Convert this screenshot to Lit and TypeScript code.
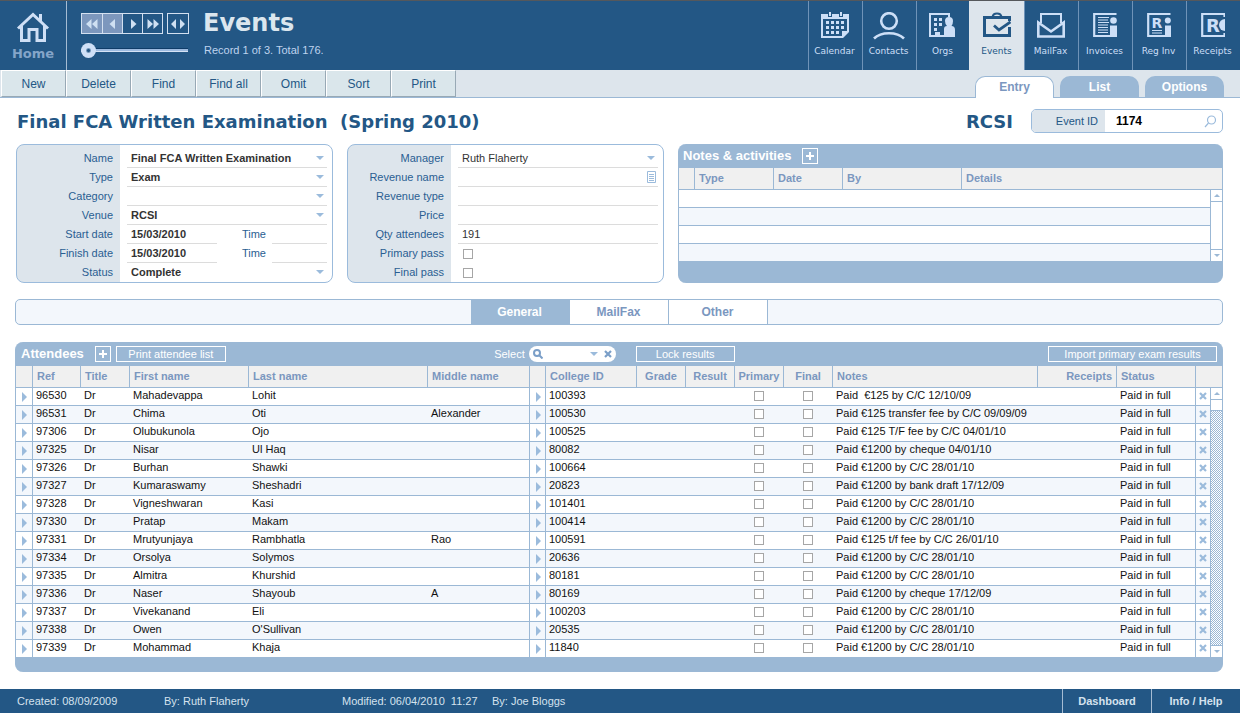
import { LitElement, html, css, nothing } from "lit";
import { customElement, state } from "lit/decorators.js";
import { classMap } from "lit/directives/class-map.js";

interface Attendee {
  ref: string;
  first: string;
  last: string;
  middle: string;
  college: string;
  notes: string;
}

const person = (ref: string, first: string, last: string, middle: string, college: string, notes: string): Attendee => ({
  ref, first, last, middle, college, notes,
});

const ATTENDEES: Attendee[] = [
  person("96530", "Mahadevappa", "Lohit", "", "100393", "Paid  €125 by C/C 12/10/09"),
  person("96531", "Chima", "Oti", "Alexander", "100530", "Paid €125 transfer fee by C/C 09/09/09"),
  person("97306", "Olubukunola", "Ojo", "", "100525", "Paid €125 T/F fee by C/C 04/01/10"),
  person("97325", "Nisar", "Ul Haq", "", "80082", "Paid €1200 by cheque 04/01/10"),
  person("97326", "Burhan", "Shawki", "", "100664", "Paid €1200 by C/C 28/01/10"),
  person("97327", "Kumaraswamy", "Sheshadri", "", "20823", "Paid €1200 by bank draft 17/12/09"),
  person("97328", "Vigneshwaran", "Kasi", "", "101401", "Paid €1200 by C/C 28/01/10"),
  person("97330", "Pratap", "Makam", "", "100414", "Paid €1200 by C/C 28/01/10"),
  person("97331", "Mrutyunjaya", "Rambhatla", "Rao", "100591", "Paid €125 t/f fee by C/C 26/01/10"),
  person("97334", "Orsolya", "Solymos", "", "20636", "Paid €1200 by C/C 28/01/10"),
  person("97335", "Almitra", "Khurshid", "", "80181", "Paid €1200 by C/C 28/01/10"),
  person("97336", "Naser", "Shayoub", "A", "80169", "Paid €1200 by cheque 17/12/09"),
  person("97337", "Vivekanand", "Eli", "", "100203", "Paid €1200 by C/C 28/01/10"),
  person("97338", "Owen", "O'Sullivan", "", "20535", "Paid €1200 by C/C 28/01/10"),
  person("97339", "Mohammad", "Khaja", "", "11840", "Paid €1200 by C/C 28/01/10"),
];

const MODULES = [
  {
    name: "Calendar",
    icon: html`<svg width="28" height="26" viewBox="0 0 28 26" aria-hidden="true">
      <path fill="currentColor" fill-rule="evenodd" d="M0 2H28V26H0ZM2 7V24H21V19H26V7Z"/>
      <path fill="currentColor" d="M21 24V19H26Z"/>
      <path fill="#235785" d="M22 26L28 20V26ZM7 0H11V5H7ZM18 0H22V5H18Z"/>
      <path fill="currentColor" d="M8 0H10V4H8ZM19 0H21V4H19ZM5 9h3v3H5zM10 9h3v3h-3zM15 9h3v3h-3zM20 9h3v3h-3zM5 14h3v3H5zM10 14h3v3h-3zM15 14h3v3h-3zM20 14h3v3h-3zM5 19h3v3H5zM10 19h3v3h-3zM15 19h3v3h-3z"/>
    </svg>`,
  },
  {
    name: "Contacts",
    icon: html`<svg width="32" height="28" viewBox="0 0 32 28" aria-hidden="true">
      <g fill="none" stroke="currentColor" stroke-width="2.6"><circle cx="16" cy="9" r="7.8"/><path d="M1 26.5C8 19.5 24 19.5 31 26.5"/></g>
    </svg>`,
  },
  {
    name: "Orgs",
    icon: html`<svg width="27" height="26" viewBox="0 0 27 26" aria-hidden="true">
      <path fill="none" stroke="currentColor" stroke-width="2" d="M20 5V2H1V24H15"/>
      <path fill="currentColor" d="M5 6h3v3H5zM10 6h3v3h-3zM5 11h3v3H5zM10 11h3v3h-3zM5 16h3v3H5zM6 20h5v5H6zM15 25V17Q15 14 18 14Q16 12 16 9Q16 5 20 5Q24 5 24 9Q24 12 22.500 14Q26 14 26 18V25Z"/>
    </svg>`,
  },
  {
    name: "Events",
    icon: html`<svg width="28" height="26" viewBox="0 0 28 26" aria-hidden="true">
      <path fill="none" stroke="currentColor" stroke-width="3" d="M26.500 9V5.500H1.500V23.500H26.500V15"/>
      <path fill="none" stroke="currentColor" stroke-width="2" d="M9.500 5Q10 1.500 14 1.500Q18 1.500 18.500 5"/>
      <path fill="none" stroke="currentColor" stroke-width="2.800" d="M11 13.500L16 18L27.500 10"/>
    </svg>`,
  },
  {
    name: "MailFax",
    icon: html`<svg width="28" height="26" viewBox="0 0 28 26" aria-hidden="true">
      <path fill="none" stroke="currentColor" stroke-width="2" d="M4 11V2H24V11"/>
      <path fill="none" stroke="currentColor" stroke-width="2.600" d="M1.300 10.500V24.500H26.700V10.500L14 19.500Z"/>
    </svg>`,
  },
  {
    name: "Invoices",
    icon: html`<svg width="24" height="26" viewBox="0 0 24 26" aria-hidden="true">
      <path fill="none" stroke="currentColor" stroke-width="2.200" d="M23.500 2H1.200V24H18"/>
      <path fill="none" stroke="currentColor" stroke-width="1.200" d="M5 5.500H16M5 8H15M5 10.500H16M5 13H15M5 15.500H15M5 18H15M5 20.500H15"/>
      <path fill="currentColor" d="M17 13.500H24V25H17Z"/><circle cx="20.500" cy="8.500" r="3.300" fill="currentColor"/>
    </svg>`,
  },
  {
    name: "Reg Inv",
    icon: html`<svg width="24" height="26" viewBox="0 0 24 26" aria-hidden="true">
      <path fill="none" stroke="currentColor" stroke-width="2.200" d="M23.500 2H1.200V24H18"/>
      <text x="4.500" y="16" font-family="DejaVu Sans" font-weight="bold" font-size="14" fill="currentColor">R</text>
      <path fill="none" stroke="currentColor" stroke-width="1.200" d="M5 18.500H15M5 21H15"/>
      <path fill="currentColor" d="M18 13.500H24V25H18Z"/><circle cx="20.800" cy="8.500" r="3" fill="currentColor"/>
    </svg>`,
  },
  {
    name: "Receipts",
    icon: html`<svg width="24" height="26" viewBox="0 0 24 26" aria-hidden="true">
      <path fill="none" stroke="currentColor" stroke-width="2.200" d="M23.500 5V2H1.200V24H23.500V21"/>
      <text x="5" y="19.500" font-family="DejaVu Sans" font-weight="bold" font-size="18" fill="currentColor">R</text>
      <path fill="currentColor" d="M24 7A6 6 0 0 0 24 19Z"/>
    </svg>`,
  },
];

const ACTIONS = ["New", "Delete", "Find", "Find all", "Omit", "Sort", "Print"];

const step = (d: string) => html`<svg width="20" height="20" viewBox="0 0 20 20" aria-hidden="true"><path fill="currentColor" d=${d}/></svg>`;

const downArrow = html`<svg class="down" width="8" height="4" viewBox="0 0 8 4" aria-hidden="true"><path fill="#9bbbdc" d="M0 0H8L4 4Z"/></svg>`;

const scrollArrow = (up: boolean) => html`<svg width="6" height="3" viewBox="0 0 6 3" aria-hidden="true"><path fill="#9bb8d5" d=${up ? "M0 3H6L3 0Z" : "M0 0H6L3 3Z"}/></svg>`;

const plus = html`<svg width="8" height="8" viewBox="0 0 8 8" aria-hidden="true"><path fill="#fff" d="M3 0h2v3h3v2H5v3H3V5H0V3h3z"/></svg>`;

const cross = (color: string) => html`<svg width="8" height="8" viewBox="0 0 8 8" aria-hidden="true"><path stroke=${color} stroke-width="2.200" d="M1 1L7 7M7 1L1 7"/></svg>`;

@customElement("app-root")
export class AppRoot extends LitElement {
  @state() private tab = "Entry";
  @state() private section = "General";

  static styles = css`
    :host {
      display: flex;
      flex-direction: column;
      min-height: 100vh;
      background: #fff;
      color: #111;
      font: 11px/14px "Liberation Sans", Arial, sans-serif;
    }
    * { box-sizing: border-box; }
    svg { display: block; flex: none; }
    button, input, select {
      font: inherit;
      color: inherit;
      margin: 0;
      padding: 0;
      border: 0;
      border-radius: 0;
      background: none;
      min-width: 0;
    }
    button { cursor: pointer; }
    a { color: inherit; text-decoration: none; }
    h1, h2, h3, p { margin: 0; }

    .top {
      display: flex;
      height: 70px;
      border-top: 1px solid #55585c;
      background: #235785;
      color: #d8e4f0;
    }
    .home {
      width: 67px;
      border-right: 1px solid #a5bcd3;
      display: flex;
      flex-direction: column;
      align-items: center;
      padding-top: 11px;
      gap: 3px;
      color: #84a5c9;
      font: bold 13px/16px "DejaVu Sans", Verdana, sans-serif;
    }
    .controls { padding: 12px 0 0 14px; width: 136px; }
    .steps { display: flex; gap: 4px; }
    .group { display: flex; border: 1px solid #d3e0f0; }
    .group button { width: 20px; height: 19px; color: #cfe0f2; display: grid; place-items: center; }
    .group button + button { border-left: 1px solid #d3e0f0; }
    .group button:disabled { background: #7c97bd; }
    .slider {
      appearance: none;
      display: block;
      width: 107px;
      height: 16px;
      margin-top: 8px;
      background: linear-gradient(#0f3c68 0 1px, #9dbbe0 1px 3px, #d5e2f5 3px 4px) 0 6px / 100% 4px no-repeat;
    }
    .slider::-webkit-slider-thumb {
      appearance: none;
      width: 15px;
      height: 15px;
      border-radius: 50%;
      background: radial-gradient(circle, #235785 0 1px, #cfe0f7 3px);
    }
    .heading { padding-top: 8px; }
    .heading h1 { font: bold 24px/28px "DejaVu Sans", Verdana, sans-serif; color: #dbe6ee; }
    .heading p { padding: 6px 0 0 1px; font-size: 11px; color: #bfd3ee; }
    .modules { margin-left: auto; display: flex; }
    .modules a {
      width: 54px;
      border-left: 1px solid #6f93b8;
      display: grid;
      grid-template-rows: 28px 14px;
      justify-items: center;
      padding: 11px 2px 0 0;
      row-gap: 4px;
      color: #cddff7;
      font: 9px/14px "DejaVu Sans", Verdana, sans-serif;
      white-space: nowrap;
    }
    .modules a.on { background: #dde5ec; color: #235785; border-left-color: #dde5ec; box-shadow: -1px 0 #dde5ec; }

    .bar {
      display: flex;
      height: 28px;
      background: #dde5ec;
      border-bottom: 1px solid #9bb8d5;
      padding: 0 16px 0 1px;
    }
    .bar .action {
      width: 65px;
      background: #dae6eb;
      border: 1px solid;
      border-color: #fff #98a9b5 #98a9b5 #fff;
      color: #235785;
      font-size: 12px;
    }
    .tabs { margin-left: auto; display: flex; align-items: flex-end; gap: 6px; margin-bottom: -1px; }
    .tabs button {
      width: 79px;
      height: 21px;
      margin-bottom: 1px;
      border-radius: 10px 10px 0 0;
      background: #9bb8d5;
      color: #fff;
      font-size: 12px;
      font-weight: bold;
    }
    .tabs button.on {
      height: 22px;
      margin-bottom: 0;
      padding-bottom: 2px;
      background: #fff;
      color: #7b97bf;
      border: 1px solid #9bb8d5;
      border-bottom: 0;
    }

    main { padding: 0 17px 0 15px; }
    .title { display: flex; align-items: center; height: 46px; color: #235785; padding-left: 2px; }
    .title h2 { font: bold 18px/24px "DejaVu Sans", Verdana, sans-serif; white-space: pre; padding-top: 2px; }
    .title h2:nth-child(2) { margin-left: auto; margin-right: 18px; }
    .eventid {
      display: flex;
      align-items: center;
      width: 192px;
      height: 24px;
      border: 1px solid #9bbbdc;
      border-radius: 5px;
      overflow: hidden;
      padding-right: 5px;
    }
    .eventid label { width: 73px; line-height: 22px; background: #dde5ec; text-align: right; padding-right: 7px; }
    .eventid input { flex: 1; font-weight: bold; font-size: 12px; color: #000; padding-left: 11px; }

    .panels { display: grid; grid-template-columns: 317fr 317fr 545fr; gap: 14px; margin-left: 1px; }
    .form {
      border: 1px solid #9bbbdc;
      border-radius: 8px;
      padding: 4px 5px 0 0;
      overflow: hidden;
      background: linear-gradient(90deg, #dde5ec 103px, #fff 103px);
    }
    .row { display: grid; grid-template-columns: 96px 1fr; column-gap: 14px; height: 19px; }
    .row > label, .time { text-align: right; line-height: 19px; color: #2a5e92; }
    .field { display: grid; grid-template-columns: 1fr 11px; align-items: center; border-bottom: 1px solid #dcdcdc; color: #333; }
    .row:last-child .field { border-bottom-color: transparent; }
    .field > :first-child { grid-area: 1 / 1 / 2 / 3; width: 100%; padding-left: 4px; height: 18px; }
    .field > svg { grid-area: 1 / 2; pointer-events: none; }
    .field select { appearance: none; }
    .strong { font-weight: bold; }
    .dates { display: grid; grid-template-columns: 90px 49px 1fr; column-gap: 3px; }
    .dates input { width: 100%; border-bottom: 1px solid #dcdcdc; padding-left: 4px; color: #333; }
    .dates .time { padding-right: 3px; }
    input[type="checkbox"] { appearance: none; display: block; width: 10px; height: 10px; border: 1px solid #a6a6a6; background: #fff; }
    .row input[type="checkbox"] { margin: 5px 0 0 5px; }

    .box { background: #9bb8d5; border: solid #9bb8d5; border-width: 0 1px; border-radius: 8px; overflow: hidden; display: flex; flex-direction: column; }
    .box header { display: flex; align-items: center; height: 24px; color: #fff; padding: 0 5px; }
    .box h3 { font-size: 13px; line-height: 16px; }
    .notes header { padding-left: 4px; }
    .add, .outline { height: 16px; border: 1px solid #fff; color: #fff; font-size: 11px; line-height: 14px; white-space: nowrap; }
    .add { width: 16px; display: grid; place-items: center; margin: 0 5px 0 11px; }
    .outline.print { width: 110px; }
    .outline.lock { width: 99px; }
    .outline.import { width: 169px; }
    .grid { display: flex; background: #fff; }
    table { flex: 1; min-width: 0; table-layout: fixed; border-collapse: separate; border-spacing: 0; }
    th {
      height: 22px;
      padding: 0 4px 1px;
      background: #f0f0f0;
      color: #7b97bf;
      font-size: 11px;
      text-align: left;
      white-space: nowrap;
      border: solid #9bb8d5;
      border-width: 0 1px 1px 0;
    }
    th:last-child { border-right: 0; }
    td { height: 18px; padding: 0 3px; border-bottom: 1px solid #9bb8d5; white-space: pre; line-height: 15px; vertical-align: top; }
    td.line { border-right: 1px solid #9bb8d5; }
    td.c { padding: 3px 1px 0 0; }
    td.c input, td.c button { margin: 0 auto; display: block; }
    td.c button { padding: 1px 0 0; }
    td.go { padding: 4px 0 0; }
    td.go button { margin-left: 6px; padding: 0; }
    tbody tr:nth-child(even) td { background: #f3f7fc; }
    tbody tr:last-child td { border-bottom: 0; height: 17px; }
    th.c { text-align: center; padding: 0 0 1px; }
    th.r { text-align: right; }
    .scroll { width: 12px; display: flex; flex-direction: column; }
    .scroll .cap { height: 22px; background: #f0f0f0; border-bottom: 1px solid #9bb8d5; }
    .scroll button { height: 12px; display: grid; place-items: center; border-left: 1px solid #9bb8d5; }
    .scroll button:first-of-type { border-bottom: 1px solid #9bb8d5; }
    .scroll button:last-of-type { border-top: 1px solid #9bb8d5; }
    .scroll .track { flex: 1; border-left: 1px solid #9bb8d5; }
    .scroll .full { background: repeating-conic-gradient(#9bb8d5 0 25%, #fff 0 50%) 0 0 / 2px 2px; }
    .thumb { height: 11px; background: #fff; border-bottom: 1px solid #9bb8d5; }
    .notes .end { height: 22px; }
    .attend .end { height: 15px; }

    .sections {
      display: flex;
      justify-content: center;
      height: 26px;
      margin: 16px 0 17px;
      border: 1px solid #9bb8d5;
      border-radius: 5px;
      background: #f3f7fc;
    }
    .sections button { width: 99px; background: #fff; color: #7b97bf; font-size: 12px; font-weight: bold; border-right: 1px solid #9bb8d5; }
    .sections button.on { background: #9bb8d5; color: #fff; }

    .spring { flex: 268; }
    .spring.wide { flex: 313; }
    .search { display: flex; align-items: center; width: 87px; height: 16px; margin: 0 20px 0 4px; padding: 0 4px; background: #fff; border-radius: 8px; color: #333; }
    .search input { flex: 1; }
    .search button { margin-left: 6px; }

    footer { display: flex; align-items: center; height: 24px; margin-top: auto; padding-left: 17px; background: #235785; color: #d5e2ee; white-space: pre; }
    footer .made { flex: 0 1 147px; }
    footer .by { flex: 0 1 178px; }
    footer .mod { flex: 0 1 150px; }
    footer a { width: 89px; line-height: 24px; border-left: 1px solid #a5bcd3; text-align: center; font-weight: bold; }
    footer a:first-of-type { margin-left: auto; }
  `;

  private pick(id: string, label: string, value: string, strong = true) {
    return html`<div class="row">
      <label for=${id}>${label}</label>
      <div class=${classMap({ field: true, strong })}>
        <select id=${id}><option>${value}</option></select>${downArrow}
      </div>
    </div>`;
  }

  private text(id: string, label: string, value = "", icon: unknown = nothing) {
    return html`<div class="row">
      <label for=${id}>${label}</label>
      <div class="field"><input id=${id} .value=${value} />${icon}</div>
    </div>`;
  }

  private date(id: string, label: string) {
    return html`<div class="row">
      <label for=${id}>${label}</label>
      <div class="dates">
        <input id=${id} class="strong" .value=${"15/03/2010"} />
        <label class="time" for="${id}-time">Time</label>
        <input id="${id}-time" />
      </div>
    </div>`;
  }

  private check(id: string, label: string) {
    return html`<div class="row">
      <label for=${id}>${label}</label>
      <input id=${id} type="checkbox" />
    </div>`;
  }

  private scrollbar(full: boolean) {
    return html`<div class="scroll">
      <div class="cap"></div>
      <button aria-label="Scroll up">${scrollArrow(true)}</button>
      <div class=${classMap({ track: true, full })}>${full ? html`<div class="thumb"></div>` : nothing}</div>
      <button aria-label="Scroll down">${scrollArrow(false)}</button>
    </div>`;
  }

  private attendee(a: Attendee) {
    const arrow = html`<svg width="5" height="10" viewBox="0 0 5 10" aria-hidden="true"><path fill="#9bbbdc" d="M0 0L5 5L0 10Z"/></svg>`;
    return html`<tr>
      <td class="line c go"><button aria-label="Open ${a.ref}">${arrow}</button></td>
      <td>${a.ref}</td>
      <td>Dr</td>
      <td>${a.first}</td>
      <td>${a.last}</td>
      <td class="line">${a.middle}</td>
      <td class="line c go"><button aria-label="Open ${a.college}">${arrow}</button></td>
      <td>${a.college}</td>
      <td></td>
      <td></td>
      <td class="c"><input type="checkbox" aria-label="Primary" /></td>
      <td class="c"><input type="checkbox" aria-label="Final" /></td>
      <td>${a.notes}</td>
      <td></td>
      <td class="line">Paid in full</td>
      <td class="c"><button aria-label="Remove ${a.ref}">${cross("#9bbbdc")}</button></td>
    </tr>`;
  }

  render() {
    const widths = [17, 48, 49, 119, 179, 102, 16, 91, 49, 49, 49, 49, 0, 79, 79, 14];
    return html`
      <div class="top">
        <a class="home" href="#home">
          <svg width="34" height="31" viewBox="0 0 34 31" aria-hidden="true">
            <path fill="none" stroke="#cfdff5" stroke-width="3" d="M2 16.500L17 2.500L32 16.500M24.500 2V9M5.500 14V28.500H13V17.500H21V28.500H28.500V14"/>
          </svg>
          Home
        </a>
        <div class="controls">
          <div class="steps">
            <div class="group">
              <button disabled aria-label="First">${step("M9.500 5V15L4 10ZM15.500 5V15L10 10Z")}</button>
              <button disabled aria-label="Previous">${step("M12 5V15L6.500 10Z")}</button>
              <button aria-label="Next">${step("M8 5V15L13.500 10Z")}</button>
              <button aria-label="Last">${step("M4.500 5V15L10 10ZM10.500 5V15L16 10Z")}</button>
            </div>
            <div class="group"><button aria-label="Go to record">${step("M8 5V15L3 10ZM12 5V15L17 10Z")}</button></div>
          </div>
          <input class="slider" type="range" min="1" max="3" value="1" aria-label="Record" />
        </div>
        <div class="heading">
          <h1>Events</h1>
          <p>Record 1 of 3. Total 176.</p>
        </div>
        <nav class="modules">
          ${MODULES.map((m) => html`<a href="#${m.name}" class=${classMap({ on: m.name === "Events" })}>${m.icon}<span>${m.name}</span></a>`)}
        </nav>
      </div>

      <div class="bar">
        ${ACTIONS.map((a) => html`<button class="action">${a}</button>`)}
        <div class="tabs">
          ${["Entry", "List", "Options"].map(
            (t) => html`<button class=${classMap({ on: this.tab === t })} @click=${() => (this.tab = t)}>${t}</button>`
          )}
        </div>
      </div>

      <main>
        <div class="title">
          <h2>Final FCA Written Examination  (Spring 2010)</h2>
          <h2>RCSI</h2>
          <div class="eventid">
            <label for="event-id">Event ID</label>
            <input id="event-id" .value=${"1174"} />
            <svg width="13" height="13" viewBox="0 0 13 13" aria-hidden="true"><g fill="none" stroke="#9bbbdc" stroke-width="1.200"><circle cx="7.500" cy="5" r="4"/><path d="M4.500 8L1 12"/></g></svg>
          </div>
        </div>

        <div class="panels">
          <div class="form">
            ${this.pick("name", "Name", "Final FCA Written Examination")}
            ${this.pick("type", "Type", "Exam")}
            ${this.pick("category", "Category", "")}
            ${this.pick("venue", "Venue", "RCSI")}
            ${this.date("start", "Start date")}
            ${this.date("finish", "Finish date")}
            ${this.pick("status", "Status", "Complete")}
          </div>
          <div class="form">
            ${this.pick("manager", "Manager", "Ruth Flaherty", false)}
            ${this.text("revenue-name", "Revenue name", "", html`<svg width="9" height="12" viewBox="0 0 9 12" aria-hidden="true"><path fill="none" stroke="#9bbbdc" d="M.5 .5H8.500V11.500H.5ZM2 3.500H7M2 5.500H7M2 7.500H7M2 9.500H7"/></svg>`)}
            ${this.text("revenue-type", "Revenue type")}
            ${this.text("price", "Price")}
            ${this.text("qty", "Qty attendees", "191")}
            ${this.check("primary-pass", "Primary pass")}
            ${this.check("final-pass", "Final pass")}
          </div>
          <section class="box notes">
            <header><h3>Notes &amp; activities</h3><button class="add" aria-label="Add note">${plus}</button></header>
            <div class="grid">
              <table>
                <colgroup><col width="16" /><col width="79" /><col width="69" /><col width="119" /><col /></colgroup>
                <thead><tr><th></th><th>Type</th><th>Date</th><th>By</th><th>Details</th></tr></thead>
                <tbody>${[0, 1, 2, 3].map(() => html`<tr><td colspan="5"></td></tr>`)}</tbody>
              </table>
              ${this.scrollbar(false)}
            </div>
            <div class="end"></div>
          </section>
        </div>

        <div class="sections">
          ${["General", "MailFax", "Other"].map(
            (s) => html`<button class=${classMap({ on: this.section === s })} @click=${() => (this.section = s)}>${s}</button>`
          )}
        </div>

        <section class="box attend">
          <header>
            <h3>Attendees</h3>
            <button class="add" aria-label="Add attendee">${plus}</button>
            <button class="outline print">Print attendee list</button>
            <span class="spring"></span>
            <label for="select">Select</label>
            <div class="search">
              <svg width="10" height="10" viewBox="0 0 10 10" aria-hidden="true"><g fill="none" stroke="#7b9fc8" stroke-width="2"><circle cx="4" cy="4" r="3"/><path d="M6 6L9.500 9.500"/></g></svg>
              <input id="select" />
              ${downArrow}
              <button aria-label="Clear">${cross("#7b9fc8")}</button>
            </div>
            <button class="outline lock">Lock results</button>
            <span class="spring wide"></span>
            <button class="outline import">Import primary exam results</button>
          </header>
          <div class="grid">
            <table>
              <colgroup>${widths.map((w) => (w ? html`<col width=${w} />` : html`<col />`))}</colgroup>
              <thead>
                <tr>
                  <th></th><th>Ref</th><th>Title</th><th>First name</th><th>Last name</th><th>Middle name</th><th></th>
                  <th>College ID</th><th class="c">Grade</th><th class="c">Result</th><th class="c">Primary</th><th class="c">Final</th>
                  <th>Notes</th><th class="r">Receipts</th><th>Status</th><th></th>
                </tr>
              </thead>
              <tbody>${ATTENDEES.map((a) => this.attendee(a))}</tbody>
            </table>
            ${this.scrollbar(true)}
          </div>
          <div class="end"></div>
        </section>
      </main>

      <footer>
        <span class="made">Created: 08/09/2009</span>
        <span class="by">By: Ruth Flaherty</span>
        <span class="mod">Modified: 06/04/2010  11:27</span>
        <span>By: Joe Bloggs</span>
        <a href="#dashboard">Dashboard</a>
        <a href="#help">Info / Help</a>
      </footer>
    `;
  }
}
